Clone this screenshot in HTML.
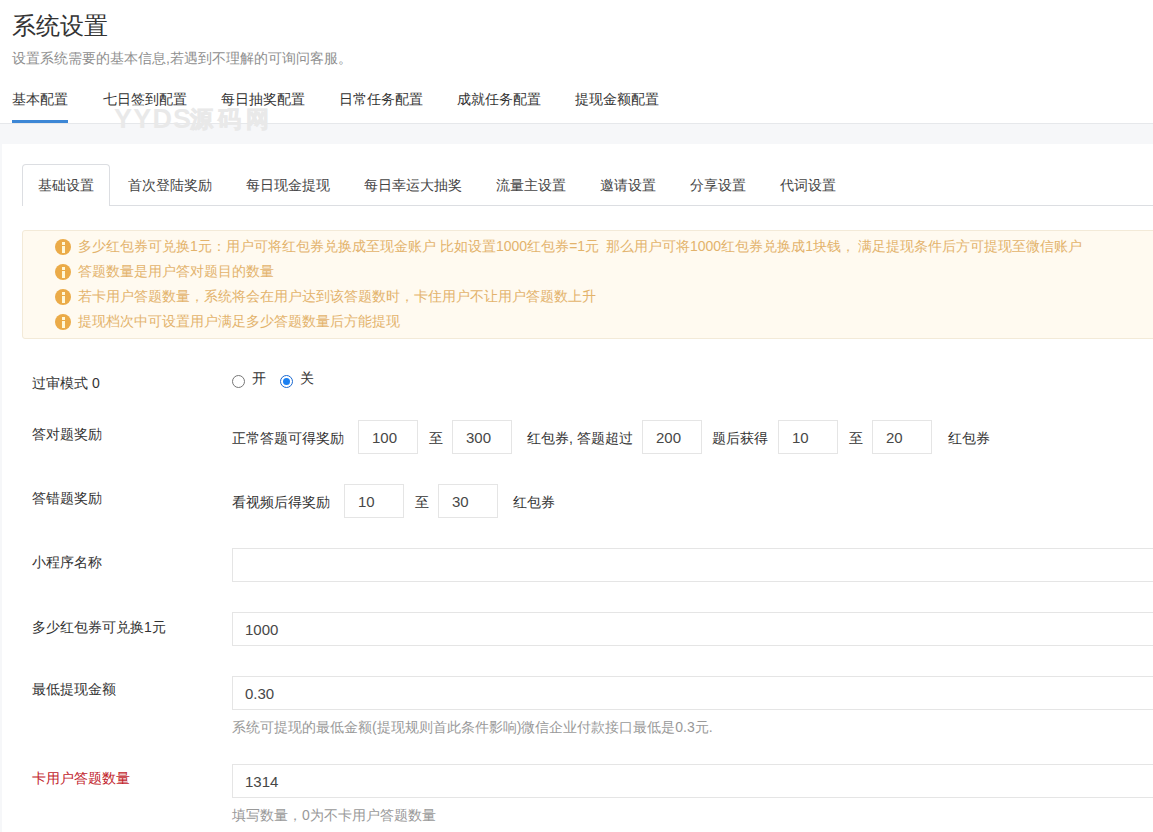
<!DOCTYPE html>
<html><head><meta charset="utf-8">
<style>
*{box-sizing:border-box;margin:0;padding:0}
html,body{width:1153px;height:832px;overflow:hidden;background:#fff}
body{font-family:"Liberation Sans",sans-serif;font-size:14px;color:#333;position:relative}
.a{position:absolute;white-space:nowrap;line-height:1}
.title{left:12px;top:14px;font-size:24px;color:#333}
.sub{left:12px;top:51px;font-size:14px;color:#8f8f8f}
.tab{top:92px;font-size:14px;color:#333}
.bar{position:absolute;left:12px;top:120px;width:56px;height:3px;background:#3d87d6}
.line1{position:absolute;left:0;top:123px;width:1153px;height:1px;background:#e6e8eb}
.band{position:absolute;left:0;top:124px;width:1153px;height:708px;background:#f6f7f9}
.card{position:absolute;left:2px;top:144px;width:1151px;height:688px;background:#fff}
.wm{left:114px;top:106px;font-size:27px;font-weight:bold;color:#e9e9e9;letter-spacing:1.2px}
.wm2{left:190px;top:108px;font-size:23px;font-weight:bold;color:#e9e9e9;letter-spacing:5px;-webkit-text-stroke:0.8px #e9e9e9}
.ctabline{position:absolute;left:22px;top:205px;width:1131px;height:1px;background:#dcdee2}
.ctab-act{position:absolute;left:22px;top:164px;width:88px;height:42px;border:1px solid #dcdee2;border-bottom:0;border-radius:4px 4px 0 0;background:#fff}
.ctab{top:178px;font-size:14px;color:#444}
.alert{position:absolute;left:22px;top:230px;width:1140px;height:109px;background:#fffaf0;border:1px solid #f3ead8;border-radius:3px}
.ic{position:absolute;left:55px;width:16px;height:16px;border-radius:50%;background:#ebab48}
.ic:before{content:"";position:absolute;left:6.5px;top:3px;width:3px;height:2.5px;background:#fff8d8}
.ic:after{content:"";position:absolute;left:6.5px;top:6.5px;width:3px;height:7px;background:#fff8d8}
.at{left:78px;font-size:14px;color:#e3b36c}
.lab{left:32px;font-size:14px;color:#333}
.inp{position:absolute;height:34px;border:1px solid #e5e5e5;background:#fff}
.it{font-size:14px;color:#333}
.num{font-size:15px;color:#474747;margin-top:-1px}
.help{left:232px;font-size:14px;color:#999}
.radio{position:absolute;width:13px;height:13px;border-radius:50%;border:1px solid #767676;background:#fff}
.radio.on{border:1.5px solid #1a68d0}
.radio.on:after{content:"";position:absolute;left:1.5px;top:1.5px;width:7px;height:7px;border-radius:50%;background:#1a80f2}
</style></head><body>
<div class="a title">系统设置</div>
<div class="a sub">设置系统需要的基本信息,若遇到不理解的可询问客服。</div>
<div class="a tab" style="left:12px">基本配置</div>
<div class="a tab" style="left:103px">七日签到配置</div>
<div class="a tab" style="left:221px">每日抽奖配置</div>
<div class="a tab" style="left:339px">日常任务配置</div>
<div class="a tab" style="left:457px">成就任务配置</div>
<div class="a tab" style="left:575px">提现金额配置</div>
<div class="band"></div>
<div class="line1"></div>
<div class="bar"></div>
<div class="a wm">YYDS</div><div class="a wm2">源码网</div>
<div class="card"></div>
<div class="ctabline"></div>
<div class="ctab-act"></div>
<div class="a ctab" style="left:38px">基础设置</div>
<div class="a ctab" style="left:128px">首次登陆奖励</div>
<div class="a ctab" style="left:246px">每日现金提现</div>
<div class="a ctab" style="left:364px">每日幸运大抽奖</div>
<div class="a ctab" style="left:496px">流量主设置</div>
<div class="a ctab" style="left:600px">邀请设置</div>
<div class="a ctab" style="left:690px">分享设置</div>
<div class="a ctab" style="left:780px">代词设置</div>

<div class="alert"></div>
<div class="ic" style="top:239px"></div>
<div class="ic" style="top:264px"></div>
<div class="ic" style="top:289px"></div>
<div class="ic" style="top:314px"></div>
<div class="a at" style="top:239px">多少红包券可兑换1元：用户可将红包券兑换成至现金账户</div>
<div class="a at" style="top:239px;left:440px">比如设置1000红包券=1元</div>
<div class="a at" style="top:239px;left:606px">那么用户可将1000红包券兑换成1块钱，</div>
<div class="a at" style="top:239px;left:858px">满足提现条件后方可提现至微信账户</div>
<div class="a at" style="top:264px">答题数量是用户答对题目的数量</div>
<div class="a at" style="top:289px">若卡用户答题数量，系统将会在用户达到该答题数时，卡住用户不让用户答题数上升</div>
<div class="a at" style="top:314px">提现档次中可设置用户满足多少答题数量后方能提现</div>

<div class="a lab" style="top:376px">过审模式 0</div>
<div class="radio" style="left:232px;top:375px"></div>
<div class="a it" style="left:252px;top:371px">开</div>
<div class="radio on" style="left:280px;top:375px"></div>
<div class="a it" style="left:300px;top:371px">关</div>

<div class="a lab" style="top:427px">答对题奖励</div>
<div class="a it" style="left:232px;top:431px">正常答题可得奖励</div>
<div class="inp" style="left:358px;top:420px;width:60px"></div>
<div class="a it num" style="left:372px;top:431px">100</div>
<div class="a it" style="left:429px;top:431px">至</div>
<div class="inp" style="left:452px;top:420px;width:60px"></div>
<div class="a it num" style="left:466px;top:431px">300</div>
<div class="a it" style="left:527px;top:431px">红包券, 答题超过</div>
<div class="inp" style="left:642px;top:420px;width:60px"></div>
<div class="a it num" style="left:656px;top:431px">200</div>
<div class="a it" style="left:712px;top:431px">题后获得</div>
<div class="inp" style="left:778px;top:420px;width:60px"></div>
<div class="a it num" style="left:792px;top:431px">10</div>
<div class="a it" style="left:849px;top:431px">至</div>
<div class="inp" style="left:872px;top:420px;width:60px"></div>
<div class="a it num" style="left:886px;top:431px">20</div>
<div class="a it" style="left:948px;top:431px">红包券</div>

<div class="a lab" style="top:491px">答错题奖励</div>
<div class="a it" style="left:232px;top:495px">看视频后得奖励</div>
<div class="inp" style="left:344px;top:484px;width:60px"></div>
<div class="a it num" style="left:358px;top:495px">10</div>
<div class="a it" style="left:415px;top:495px">至</div>
<div class="inp" style="left:438px;top:484px;width:60px"></div>
<div class="a it num" style="left:452px;top:495px">30</div>
<div class="a it" style="left:513px;top:495px">红包券</div>

<div class="a lab" style="top:555px">小程序名称</div>
<div class="inp" style="left:232px;top:548px;width:940px"></div>

<div class="a lab" style="top:620px">多少红包券可兑换1元</div>
<div class="inp" style="left:232px;top:612px;width:940px"></div>
<div class="a it num" style="left:245px;top:623px">1000</div>

<div class="a lab" style="top:682px">最低提现金额</div>
<div class="inp" style="left:232px;top:676px;width:940px"></div>
<div class="a it num" style="left:245px;top:687px">0.30</div>
<div class="a help" style="top:720px">系统可提现的最低金额(提现规则首此条件影响)微信企业付款接口最低是0.3元.</div>

<div class="a lab" style="top:771px;color:#c1232b">卡用户答题数量</div>
<div class="inp" style="left:232px;top:764px;width:940px"></div>
<div class="a it num" style="left:245px;top:775px">1314</div>
<div class="a help" style="top:808px">填写数量，0为不卡用户答题数量</div>
</body></html>
